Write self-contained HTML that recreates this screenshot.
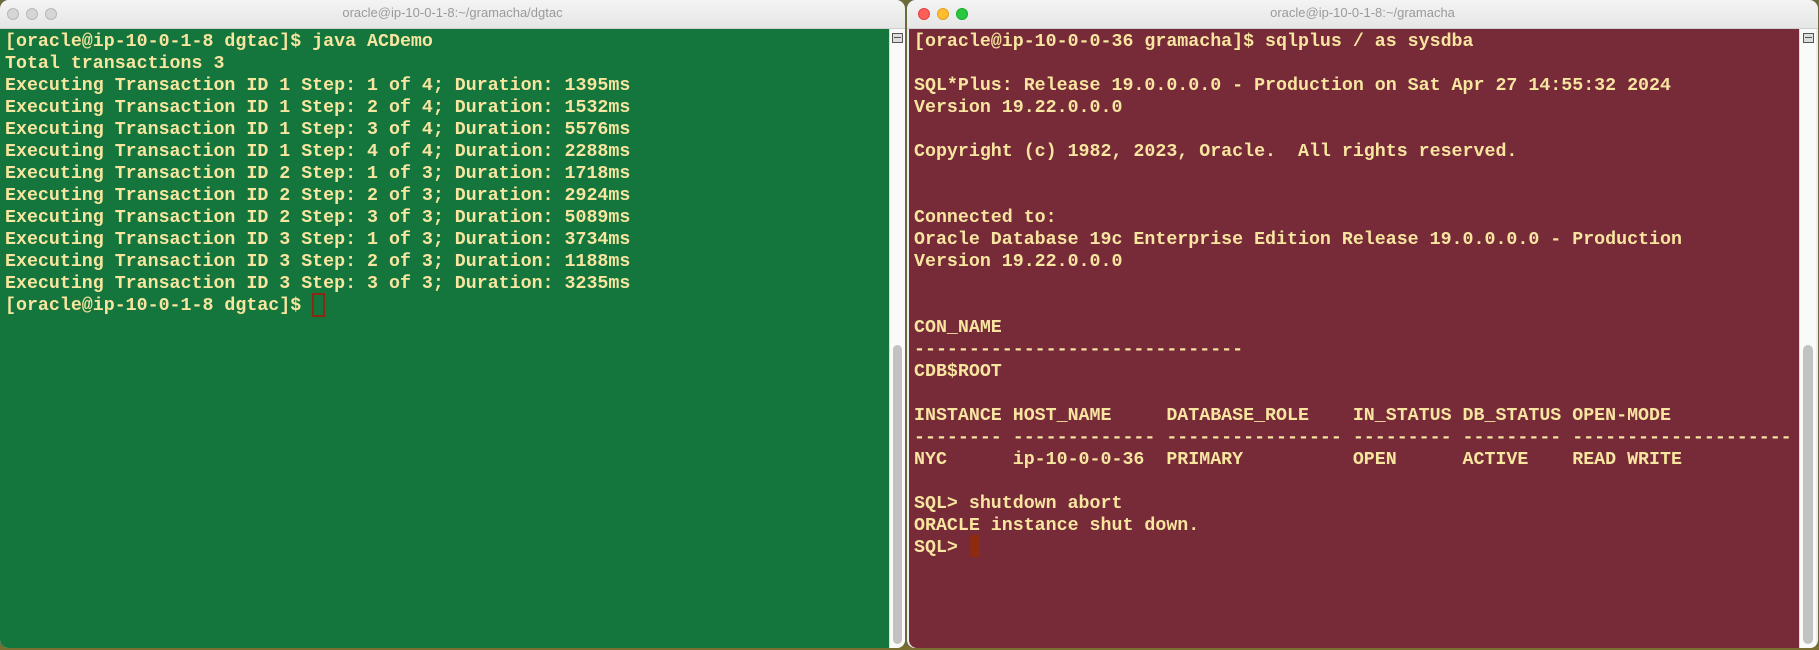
<!DOCTYPE html>
<html><head><style>
html,body{margin:0;padding:0;width:1819px;height:650px;overflow:hidden;background:#6b6a3a;}
.win{position:absolute;top:0;background:#ececec;border-radius:9px 9px 8px 8px;overflow:hidden;}
.title{position:absolute;top:0;left:0;right:0;height:28px;background:linear-gradient(#f4f4f4,#e6e6e6);border-bottom:1px solid #cfcfcf;font:13px "Liberation Sans",sans-serif;color:#9a9a9a;text-align:center;line-height:26px;}
.dot{position:absolute;top:8px;width:11px;height:11px;border-radius:50%;}
.term{position:absolute;top:29px;bottom:0;left:0;}
pre{position:absolute;margin:0;font:bold 18.3px/22px "Liberation Mono",monospace;color:#f7e5a0;}
.sb{position:absolute;top:29px;bottom:0;background:#fafafa;border-left:1px solid #ddd;}
.thumb{position:absolute;left:3px;right:3px;top:316px;bottom:4px;background:#c2c2c2;border-radius:5px;}
.ic{position:absolute;top:4px;left:2px;width:9px;height:8px;border:1px solid #555;background:#ddd;}
.ic:after{content:"";position:absolute;left:1px;right:1px;top:3px;height:1px;background:#555;}
</style></head><body>
<div style="position:absolute;left:0;right:0;bottom:0;height:4px;background:#7a6e30"></div>
<div class="win" style="left:0;width:905px;height:648px;">
  <div class="title">oracle@ip-10-0-1-8:~/gramacha/dgtac
    <div class="dot" style="left:7px;background:#d6d6d6;border:1px solid #b8b8b8;width:10px;height:10px"></div>
    <div class="dot" style="left:26px;background:#d6d6d6;border:1px solid #b8b8b8;width:10px;height:10px"></div>
    <div class="dot" style="left:45px;background:#d6d6d6;border:1px solid #b8b8b8;width:10px;height:10px"></div>
  </div>
  <div class="term" style="width:889px;background:#14763c;border-radius:0 0 0 8px;">
<pre style="left:5px;top:2px;">[oracle@ip-10-0-1-8 dgtac]$ java ACDemo
Total transactions 3
Executing Transaction ID 1 Step: 1 of 4; Duration: 1395ms
Executing Transaction ID 1 Step: 2 of 4; Duration: 1532ms
Executing Transaction ID 1 Step: 3 of 4; Duration: 5576ms
Executing Transaction ID 1 Step: 4 of 4; Duration: 2288ms
Executing Transaction ID 2 Step: 1 of 3; Duration: 1718ms
Executing Transaction ID 2 Step: 2 of 3; Duration: 2924ms
Executing Transaction ID 2 Step: 3 of 3; Duration: 5089ms
Executing Transaction ID 3 Step: 1 of 3; Duration: 3734ms
Executing Transaction ID 3 Step: 2 of 3; Duration: 1188ms
Executing Transaction ID 3 Step: 3 of 3; Duration: 3235ms
[oracle@ip-10-0-1-8 dgtac]$ </pre>
    <div style="position:absolute;left:312px;top:264px;width:9px;height:20px;border:2px solid #8a2a12;"></div>
  </div>
  <div class="sb" style="left:889px;width:15px;"><div class="ic"></div><div class="thumb"></div></div>
</div>
<div class="win" style="left:907px;width:911px;height:648px;">
  <div class="title">oracle@ip-10-0-1-8:~/gramacha
    <div class="dot" style="left:11px;background:#fe5f57;border:1px solid #e0443e;width:10px;height:10px"></div>
    <div class="dot" style="left:30px;background:#febc2e;border:1px solid #dea123;width:10px;height:10px"></div>
    <div class="dot" style="left:49px;background:#28c840;border:1px solid #1aab29;width:10px;height:10px"></div>
  </div>
  <div class="term" style="left:2px;width:890px;background:#772a38;border-radius:0 0 0 8px;">
<pre style="left:5px;top:2px;">[oracle@ip-10-0-0-36 gramacha]$ sqlplus / as sysdba

SQL*Plus: Release 19.0.0.0.0 - Production on Sat Apr 27 14:55:32 2024
Version 19.22.0.0.0

Copyright (c) 1982, 2023, Oracle.  All rights reserved.


Connected to:
Oracle Database 19c Enterprise Edition Release 19.0.0.0.0 - Production
Version 19.22.0.0.0


CON_NAME
------------------------------
CDB$ROOT

INSTANCE HOST_NAME     DATABASE_ROLE    IN_STATUS DB_STATUS OPEN-MODE
-------- ------------- ---------------- --------- --------- --------------------
NYC      ip-10-0-0-36  PRIMARY          OPEN      ACTIVE    READ WRITE

SQL&gt; shutdown abort
ORACLE instance shut down.
SQL&gt; </pre>
    <div style="position:absolute;left:61px;top:506px;width:10px;height:22px;background:#8d2a12;"></div>
  </div>
  <div class="sb" style="left:892px;width:16px;"><div class="ic" style="left:3px"></div><div class="thumb"></div></div>
</div>
</body></html>
